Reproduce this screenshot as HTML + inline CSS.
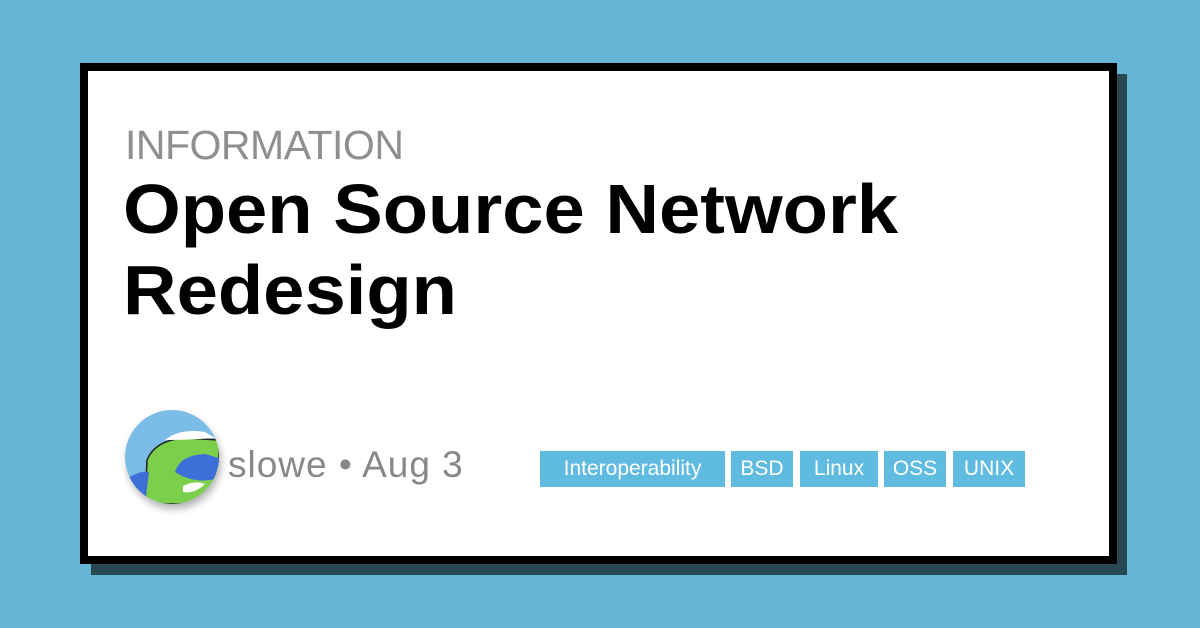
<!DOCTYPE html>
<html><head><style>
body{margin:0;width:1200px;height:628px;background:#64b5d6;position:relative;overflow:hidden;font-family:"Liberation Sans",sans-serif}
.sh{position:absolute;left:91px;top:74px;width:1036px;height:501px;background:#284852}
.card{position:absolute;left:80px;top:63px;width:1021px;height:485px;background:#fff;border:8px solid #000}
.cat{position:absolute;left:125px;top:122px;font-size:41px;color:#8f8f8f;letter-spacing:-0.5px}
.t{position:absolute;left:123px;top:169px;font-size:70px;font-weight:bold;line-height:81px;color:#000;transform:scaleX(1.06);transform-origin:0 0;white-space:nowrap}
.av{position:absolute;left:125px;top:410px;width:94px;height:94px;border-radius:50%;overflow:hidden;box-shadow:2px 5px 8px rgba(0,0,0,.3)}
.m{position:absolute;left:228px;top:444px;font-size:37px;color:#888;letter-spacing:1px}
.tag{position:absolute;top:451px;height:36px;background:#5fbbe0;color:#fff;font-size:21px;line-height:36px;text-align:center}
</style></head><body>
<div class="sh"></div>
<div class="card"></div>
<div class="cat">INFORMATION</div>
<div class="t">Open Source Network<br>Redesign</div>
<div class="av"><svg width="94" height="94" viewBox="0 0 94 94">
<rect width="94" height="94" fill="#7cbde8"/>
<path d="M20 94 L22 50 Q30 30 60 28 L94 30 L94 94Z" fill="#7ccf4a" stroke="#222" stroke-width="1.5"/>
<path d="M50 62 Q55 45 80 44 L94 48 L94 68 Q70 75 50 62Z" fill="#3d6fd8"/>
<path d="M0 70 Q15 60 24 62 L20 94 L0 94Z" fill="#3d6fd8"/>
<path d="M40 30 Q55 18 80 22 L90 28 Q60 30 40 30Z" fill="#fff"/>
<path d="M58 76 Q70 70 80 74 Q70 84 58 82Z" fill="#fff"/>
</svg></div>
<div class="m">slowe • Aug 3</div>
<div class="tag" style="left:540px;width:185px">Interoperability</div>
<div class="tag" style="left:731px;width:62px">BSD</div>
<div class="tag" style="left:800px;width:78px">Linux</div>
<div class="tag" style="left:884px;width:62px">OSS</div>
<div class="tag" style="left:953px;width:72px">UNIX</div>
</body></html>
